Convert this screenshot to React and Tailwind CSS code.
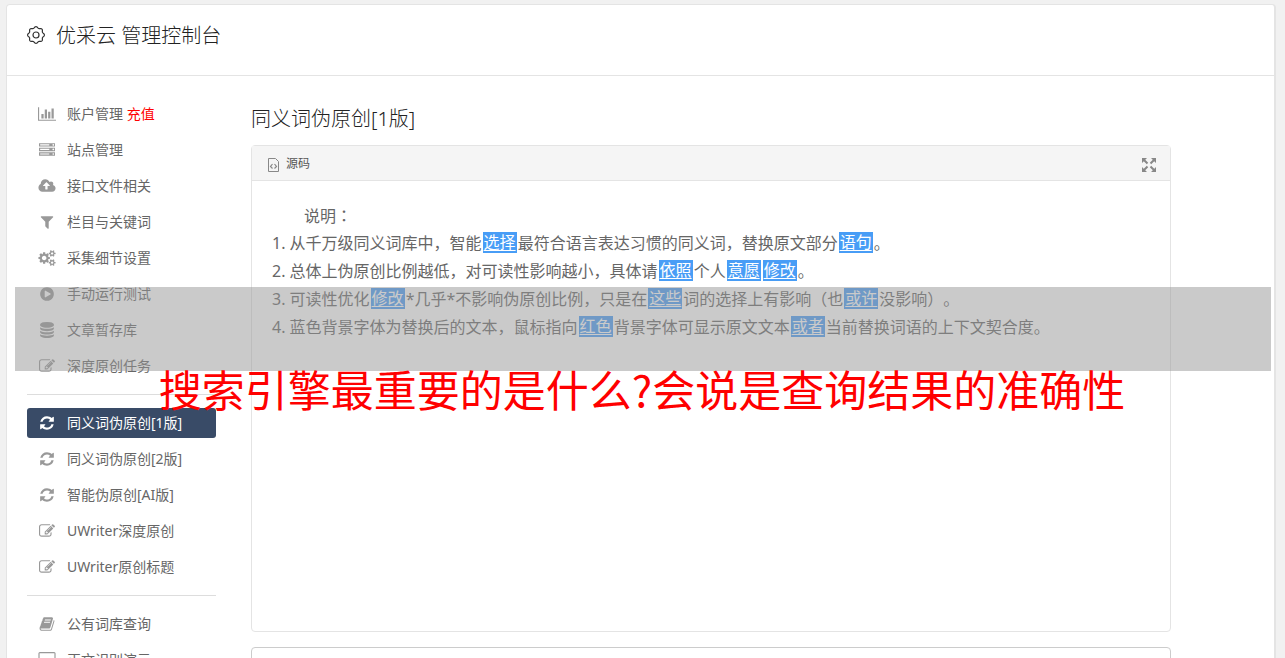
import React from "react";

const PATHS = {
  chart: {
    box: "0 0 2048 1792",
    d: "M640 896v512h-256v-512h256zm384-512v1024h-256v-1024h256zm1024 1152v128h-2048v-1536h128v1408h1920zm-640-896v768h-256v-768h256zm384-384v1152h-256v-1152h256z",
  },
  server: {
    box: "0 0 1792 1792",
    d: "M128 1408h1024v-128h-1024v128zm0-512h1024v-128h-1024v128zm1568 448q0-40-28-68t-68-28-68 28-28 68 28 68 68 28 68-28 28-68zm-1568-960h1024v-128h-1024v128zm1568 448q0-40-28-68t-68-28-68 28-28 68 28 68 68 28 68-28 28-68zm0-512q0-40-28-68t-68-28-68 28-28 68 28 68 68 28 68-28 28-68zm96 832v384h-1792v-384h1792zm0-512v384h-1792v-384h1792zm0-512v384h-1792v-384h1792z",
  },
  cloud: {
    box: "-64 0 1920 1792",
    d: "M1216 864q0-14-9-23l-352-352q-9-9-23-9t-23 9l-351 351q-10 12-10 24 0 14 9 23t23 9h224v352q0 13 9.500 22.500t22.500 9.500h192q13 0 22.500-9.500t9.500-22.500v-352h224q13 0 22.500-9.500t9.500-22.500zm640 288q0 159-112.500 271.500t-271.500 112.500h-1088q-185 0-316.500-131.500t-131.500-316.500q0-130 70-240t188-165q-2-30-2-43 0-212 150-362t362-150q156 0 285.500 87t188.500 231q71-62 166-62 106 0 181 75t75 181q0 76-41 138 130 31 213.500 135.500t83.500 238.500z",
  },
  filter: {
    box: "0 0 1792 1792",
    d: "M1595 295q17 41-14 70l-493 493v742q0 42-39 59-13 5-25 5-27 0-45-19l-256-256q-19-19-19-45v-486l-493-493q-31-29-14-70 17-39 59-39h1280q42 0 59 39z",
  },
  cogs: {
    box: "0 0 1920 1792",
    d: "M896 896q0-106-75-181t-181-75-181 75-75 181 75 181 181 75 181-75 75-181zm768 512q0-52-38-90t-90-38-90 38-38 90q0 53 37.500 90.500t90.500 37.500 90.500-37.500 37.500-90.500zm0-1024q0-52-38-90t-90-38-90 38-38 90q0 53 37.500 90.500t90.500 37.500 90.500-37.500 37.500-90.500zm-384 421v185q0 10-7 19.500t-16 10.500l-155 24q-11 35-32 76 34 48 90 115 7 11 7 20 0 12-7 19-23 30-82.500 89.500t-78.500 59.500q-11 0-21-7l-115-90q-37 19-77 31-11 108-23 155-7 24-30 24h-186q-11 0-20-7.500t-10-17.500l-23-153q-34-10-75-31l-118 89q-7 7-20 7-11 0-21-8-144-133-144-160 0-9 7-19 10-14 41-53t47-61q-23-44-35-82l-152-24q-10-1-17-9.500t-7-19.500v-185q0-10 7-19.500t16-10.500l155-24q11-35 32-76-34-48-90-115-7-11-7-20 0-12 7-20 22-30 82-89t79-59q11 0 21 7l115 90q34-18 77-32 11-108 23-154 7-24 30-24h186q11 0 20 7.500t10 17.500l23 153q34 10 75 31l118-89q8-7 20-7 11 0 21 8 144 133 144 160 0 8-7 19-12 16-42 54t-45 60q23 48 34 82l152 23q10 2 17 10.500t7 19.500zm640 533v140q0 16-149 31-12 27-30 52 51 113 51 138 0 4-4 7-122 71-124 71-8 0-46-47t-52-68q-20 2-30 2t-30-2q-14 21-52 68t-46 47q-2 0-124-71-4-3-4-7 0-25 51-138-18-25-30-52-149-15-149-31v-140q0-16 149-31 13-29 30-52-51-113-51-138 0-4 4-7 4-2 35-20t59-34 30-16q8 0 46 46.500t52 67.500q20-2 30-2t30 2q51-71 92-112l6-2q4 0 124 70 4 3 4 7 0 25-51 138 17 23 30 52 149 15 149 31zm0-1024v140q0 16-149 31-12 27-30 52 51 113 51 138 0 4-4 7-122 71-124 71-8 0-46-47t-52-68q-20 2-30 2t-30-2q-14 21-52 68t-46 47q-2 0-124-71-4-3-4-7 0-25 51-138-18-25-30-52-149-15-149-31v-140q0-16 149-31 13-29 30-52-51-113-51-138 0-4 4-7 4-2 35-20t59-34 30-16q8 0 46 46.500t52 67.500q20-2 30-2t30 2q51-71 92-112l6-2q4 0 124 70 4 3 4 7 0 25-51 138 17 23 30 52 149 15 149 31z",
  },
  play: {
    box: "0 0 1792 1792",
    d: "M896 128q209 0 385.500 103t279.500 279.500 103 385.500-103 385.500-279.500 279.500-385.500 103-385.500-103-279.500-279.500-103-385.500 103-385.500 279.500-279.500 385.500-103zm384 823q32-18 32-55t-32-55l-544-320q-31-19-64-1-32 19-32 56v640q0 37 32 56 16 8 32 8 17 0 32-9z",
  },
  database: {
    box: "0 0 1792 1792",
    d: "M896 768q237 0 443-43t325-127v170q0 69-103 128t-280 93.500-385 34.500-385-34.500-280-93.500-103-128v-170q119 84 325 127t443 43zm0 768q237 0 443-43t325-127v170q0 69-103 128t-280 93.500-385 34.500-385-34.500-280-93.500-103-128v-170q119 84 325 127t443 43zm0-384q237 0 443-43t325-127v170q0 69-103 128t-280 93.500-385 34.500-385-34.500-280-93.500-103-128v-170q119 84 325 127t443 43zm0-1152q208 0 385 34.500t280 93.500 103 128v128q0 69-103 128t-280 93.500-385 34.500-385-34.500-280-93.500-103-128v-128q0-69 103-128t280-93.500 385-34.500z",
  },
  edit: {
    box: "0 0 1792 1792",
    d: "M888 1184l116-116-152-152-116 116v56h96v96h56zm440-720q-16-16-33 1l-350 350q-17 17-1 33t33-1l350-350q17-17 1-33zm80 594v190q0 119-84.500 203.500t-203.500 84.500h-832q-119 0-203.500-84.500t-84.500-203.500v-832q0-119 84.500-203.500t203.500-84.500h832q63 0 117 25 15 7 18 23 3 17-9 29l-49 49q-14 14-32 8-23-6-45-6h-832q-66 0-113 47t-47 113v832q0 66 47 113t113 47h832q66 0 113-47t47-113v-126q0-13 9-22l64-64q15-15 35-7t20 29zm-96-738l288 288-672 672h-288v-288zm444 132l-92 92-288-288 92-92q28-28 68-28t68 28l152 152q28 28 28 68t-28 68z",
  },
  refresh: {
    box: "0 0 1792 1792",
    d: "M1639 1056q0 5-1 7-64 268-268 434.500t-478 166.500q-146 0-282.500-55t-243.500-157l-129 129q-19 19-45 19t-45-19-19-45v-448q0-26 19-45t45-19h448q26 0 45 19t19 45-19 45l-137 137q71 66 161 102t187 36q134 0 250-65t186-179q11-17 53-117 8-23 30-23h192q13 0 22.500 9.500t9.500 22.500zm25-800v448q0 26-19 45t-45 19h-448q-26 0-45-19t-19-45 19-45l138-138q-148-137-349-137-134 0-250 65t-186 179q-11 17-53 117-8 23-30 23h-199q-13 0-22.500-9.500t-9.500-22.500v-7q65-268 270-434.500t480-166.500q146 0 284 55.500t245 156.500l130-129q19-19 45-19t45 19 19 45z",
  },
  book: {
    box: "0 0 1792 1792",
    d: "M1703 478q40 57 18 129l-275 906q-19 64-76.500 107.500t-122.500 43.500h-923q-77 0-148.500-53.500t-99.500-131.500q-24-67-2-127 0-4 3-27t4-37q1-8-3-21.500t-3-19.500q2-11 8-21t16.500-23.500 16.500-23.500q23-38 45-91.500t30-91.500q3-10 .5-30t-.5-28q3-11 17-28t17-23q21-36 42-92t25-90q1-9-2.500-32t.5-28q4-13 22-30.500t22-22.500q19-26 42.500-84.500t27.500-96.500q1-8-3-25.500t-2-26.500q2-8 9-18t18-23 17-21q8-12 16.500-30.500t15-35 16-36 19.500-32 26.500-23.500 36-11.500 47.500 5.500l-1 3q38-9 51-9h761q74 0 114 56t18 130l-274 906q-36 119-71.500 153.500t-128.500 34.500h-869q-27 0-38 15-11 16-1 43 24 70 144 70h923q29 0 56-15.500t35-41.500l300-987q7-22 5-57 38 15 59 43zm-1064 2q-4 13 2 22.500t20 9.500h608q13 0 25.500-9.500t16.500-22.500l21-64q4-13-2-22.500t-20-9.500h-608q-13 0-25.500 9.500t-16.500 22.500zm-83 256q-4 13 2 22.500t20 9.500h608q13 0 25.500-9.500t16.500-22.500l21-64q4-13-2-22.500t-20-9.500h-608q-13 0-25.500 9.500t-16.500 22.500z",
  },
  desktop: {
    box: "0 0 1920 1792",
    d: "M1792 992v-832q0-13-9.500-22.500t-22.500-9.500h-1600q-13 0-22.500 9.500t-9.500 22.500v832q0 13 9.500 22.500t22.500 9.500h1600q13 0 22.500-9.500t9.500-22.500zm128-832v1088q0 66-47 113t-113 47h-544q0 37 16 77.500t32 71 16 43.500q0 26-19 45t-45 19h-512q-26 0-45-19t-19-45q0-14 16-44t32-70 16-78h-544q-66 0-113-47t-47-113v-1088q0-66 47-113t113-47h1600q66 0 113 47t47 113z",
  },
};

function Icon({ name }) {
  const wide = !PATHS[name].box.startsWith("0 0 1792");
  return (
    <svg
      viewBox={PATHS[name].box}
      className={wide ? "h-4 w-[18px]" : "size-4"}
      fill="currentColor"
      fillRule={name === "server" ? "evenodd" : "nonzero"}
      aria-hidden="true"
    >
      <path d={PATHS[name].d} />
    </svg>
  );
}

// Scalloped outline with eight rounded teeth.
const GEAR =
  Array.from({ length: 97 }, (_, i) => {
    const t = (i / 96) * Math.PI * 2;
    const r = 7.7 + 0.7 * Math.cos(8 * t);
    return `${i ? "L" : "M"}${(9 + r * Math.cos(t)).toFixed(2)} ${(9 + r * Math.sin(t)).toFixed(2)}`;
  }).join("") + "Z";

function Gear() {
  return (
    <svg viewBox="0 0 18 18" className="size-[18px]" fill="none" stroke="#333" strokeWidth="1.2" aria-hidden="true">
      <path d={GEAR} />
      <circle cx="9" cy="9" r="3" />
    </svg>
  );
}

const GROUPS = [
  [
    ["chart", "账户管理", "充值"],
    ["server", "站点管理"],
    ["cloud", "接口文件相关"],
    ["filter", "栏目与关键词"],
    ["cogs", "采集细节设置"],
    ["play", "手动运行测试"],
    ["database", "文章暂存库"],
    ["edit", "深度原创任务"],
  ],
  [
    ["refresh", "同义词伪原创[1版]"],
    ["refresh", "同义词伪原创[2版]"],
    ["refresh", "智能伪原创[AI版]"],
    ["edit", "UWriter深度原创"],
    ["edit", "UWriter原创标题"],
  ],
  [
    ["book", "公有词库查询"],
    ["desktop", "正文识别演示"],
  ],
];

const ACTIVE = "同义词伪原创[1版]";

function NavItem({ icon, label, extra }) {
  const active = label === ACTIVE;
  return (
    <li>
      <a
        href="#"
        aria-current={active ? "page" : undefined}
        className={`flex h-[30px] items-center gap-[10px] rounded-[3px] pl-[10px] text-sm whitespace-nowrap ${
          active ? "bg-[#394b67] text-white" : "text-[#666]"
        }`}
      >
        <span className={`flex w-5 justify-center ${active ? "text-white" : "text-[#999]"}`}>
          <Icon name={icon} />
        </span>
        <span>
          {label}
          {extra && <span className="text-[#f00]"> {extra}</span>}
        </span>
      </a>
    </li>
  );
}

function Hl({ children }) {
  return <span className="mx-px mb-1 inline-block h-[21px] bg-[#489df6] px-px align-bottom leading-[21px] text-white underline underline-offset-2">{children}</span>;
}

export default function App() {
  return (
    <div className="relative h-screen overflow-hidden bg-[#f1f1f1] pt-1 pr-[9px] pl-[6px] font-['Noto_Sans','Noto_Sans_CJK_SC',sans-serif] font-normal [text-spacing-trim:space-all]" lang="zh-CN">
      <div className="min-h-full rounded-t-[4px] border border-r-2 border-[#e4e4e4] bg-white">
        <header className="flex h-[71px] items-start gap-[11px] border-b border-[#e4e4e4] px-5 pt-[15px]">
          <span className="flex h-[30px] items-center">
            <Gear />
          </span>
          <h1 className="text-xl leading-8 font-light text-[#222]">优采云 管理控制台</h1>
        </header>

        <div className="flex items-start gap-[35px] pt-[23px] pl-5">
          <nav className="w-[189px] shrink-0" aria-label="菜单">
            {GROUPS.map((items, i) => (
              <React.Fragment key={i}>
                {i > 0 && <hr className="my-[13px] border-[#ddd]" />}
                <ul className="flex flex-col gap-[6px]">
                  {items.map(([icon, label, extra]) => (
                    <NavItem key={label} icon={icon} label={label} extra={extra} />
                  ))}
                </ul>
              </React.Fragment>
            ))}
          </nav>

          <main className="mr-[103px] min-w-0 flex-1 pt-[5px]">
            <h2 className="text-xl leading-[30px] font-light text-[#222]">同义词伪原创[1版]</h2>
            <section className="mt-[11px] rounded-[4px] border border-[#e4e4e4]">
              <div className="flex h-[35px] items-center justify-between border-b border-[#e4e4e4] bg-[#f5f5f5] pr-[14px] pl-4">
                <div className="flex items-center gap-[7px] pt-px text-xs text-[#555]">
                  <svg viewBox="0 0 11 14" className="mt-[2px] h-[14px] w-[11px]" fill="none" stroke="#888" aria-hidden="true">
                    <path d="M.5 .5h7l3 3v10h-10z" />
                    <path d="M4.500 6L2.500 8.500l2 2M6.500 6l2 2.500-2 2" strokeWidth="1.200" />
                  </svg>
                  源码
                </div>
                <button type="button" aria-label="全屏" className="mt-1">
                  <svg viewBox="0 0 14 14" className="size-[14px]" fill="#888" stroke="#888" strokeWidth="2" aria-hidden="true">
                    <path d="M0 0h5L0 5zM14 0v5L9 0zM0 14V9l5 5zM14 14H9l5-5z" stroke="none" />
                    <path d="M2 2l3.500 3.500M12 2L8.500 5.500M2 12l3.500-3.500M12 12L8.500 8.500" />
                  </svg>
                </button>
              </div>
              <div className="min-h-[450px] px-5 pt-5 text-base leading-7 text-[#666]">
                <p className="h-7 indent-8">
                  说明<span lang="zh-TW" className="font-['Noto_Sans_CJK_TC',sans-serif]">：</span>
                </p>
                <p>1. 从千万级同义词库中，智能<Hl>选择</Hl>最符合语言表达习惯的同义词，替换原文部分<Hl>语句</Hl>。</p>
                <p>2. 总体上伪原创比例越低，对可读性影响越小，具体请<Hl>依照</Hl>个人<Hl>意愿</Hl><Hl>修改</Hl>。</p>
                <p>3. 可读性优化<Hl>修改</Hl>*几乎*不影响伪原创比例，只是在<Hl>这些</Hl>词的选择上有影响（也<Hl>或许</Hl>没影响）。</p>
                <p>4. 蓝色背景字体为替换后的文本，鼠标指向<Hl>红色</Hl>背景字体可显示原文文本<Hl>或者</Hl>当前替换词语的上下文契合度。</p>
              </div>
            </section>
            <textarea aria-label="原文" className="mt-[15px] block h-40 w-full resize-none rounded-[4px] border border-[#ccc] bg-white" />
          </main>
        </div>
      </div>

      <div className="pointer-events-none absolute top-[287px] right-[14px] left-[15px]">
        <div className="h-[84px] bg-[#969696]/50" />
        <p className="-mt-[7px] pr-[2px] text-center font-['Noto_Sans_CJK_SC',sans-serif] text-[43px] leading-[48px] whitespace-nowrap text-[#f00]">
          搜索引擎最重要的是什么?会说是查询结果的准确性
        </p>
      </div>
    </div>
  );
}
